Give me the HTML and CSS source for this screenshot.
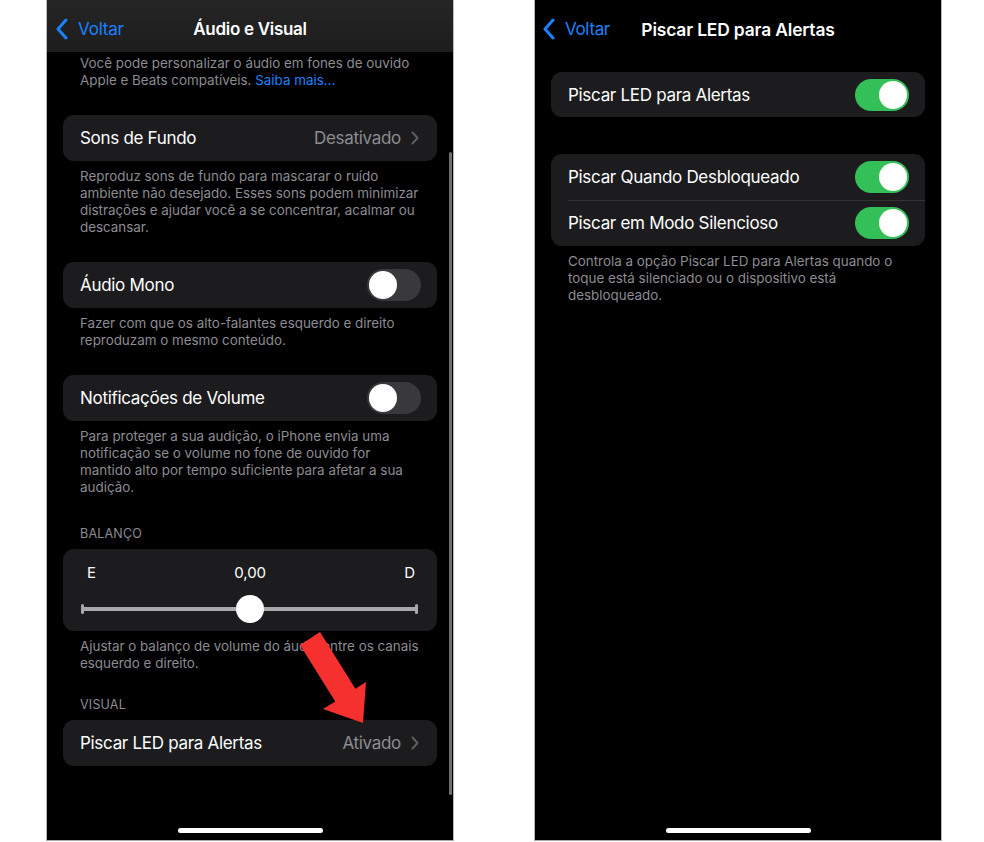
FILE: index.html
```html
<!DOCTYPE html>
<html lang="pt-BR">
<head>
<meta charset="utf-8">
<title>Áudio e Visual</title>
<link rel="stylesheet" href="styles.css">
</head>
<body>
<div class="canvas">

  <section class="phone">
    <header class="nav nav-gray">
      <div class="back">
        <svg class="back-chev" width="14" height="22" viewBox="0 0 14 22"><polyline points="11,2 3,11 11,20" fill="none" stroke="#1a82ff" stroke-width="3" stroke-linecap="round" stroke-linejoin="round"/></svg>
        <span>Voltar</span>
      </div>
      <div class="nav-title">Áudio e Visual</div>
    </header>

    <div class="content content-left">
      <p class="foot first">Você pode personalizar o áudio em fones de ouvido<br>Apple e Beats compatíveis. <span class="link">Saiba mais...</span></p>

      <div class="card">
        <div class="row">
          <span class="label">Sons de Fundo</span>
          <span class="value">Desativado</span>
          <svg class="chev" width="8" height="14" viewBox="0 0 8 14"><polyline points="1.5,1.5 6.5,7 1.5,12.5" fill="none" stroke="#5d5d62" stroke-width="2" stroke-linecap="round" stroke-linejoin="round"/></svg>
        </div>
      </div>
      <p class="foot">Reproduz sons de fundo para mascarar o ruído<br>ambiente não desejado. Esses sons podem minimizar<br>distrações e ajudar você a se concentrar, acalmar ou<br>descansar.</p>

      <div class="card">
        <div class="row">
          <span class="label">Áudio Mono</span>
          <span class="toggle"><span class="knob"></span></span>
        </div>
      </div>
      <p class="foot">Fazer com que os alto-falantes esquerdo e direito<br>reproduzam o mesmo conteúdo.</p>

      <div class="card">
        <div class="row">
          <span class="label">Notificações de Volume</span>
          <span class="toggle"><span class="knob"></span></span>
        </div>
      </div>
      <p class="foot">Para proteger a sua audição, o iPhone envia uma<br>notificação se o volume no fone de ouvido for<br>mantido alto por tempo suficiente para afetar a sua<br>audição.</p>

      <h3 class="group-head head-balanco">BALANÇO</h3>
      <div class="card slider-card">
        <div class="slider-labels">
          <span>E</span>
          <span>0,00</span>
          <span>D</span>
        </div>
        <div class="slider">
          <span class="cap"></span>
          <span class="track"></span>
          <span class="cap"></span>
          <span class="thumb"></span>
        </div>
      </div>
      <p class="foot">Ajustar o balanço de volume do áudio entre os canais<br>esquerdo e direito.</p>

      <h3 class="group-head head-visual">VISUAL</h3>
      <div class="card">
        <div class="row">
          <span class="label">Piscar LED para Alertas</span>
          <span class="value">Ativado</span>
          <svg class="chev" width="8" height="14" viewBox="0 0 8 14"><polyline points="1.5,1.5 6.5,7 1.5,12.5" fill="none" stroke="#5d5d62" stroke-width="2" stroke-linecap="round" stroke-linejoin="round"/></svg>
        </div>
      </div>
    </div>

    <div class="scrollbar"></div>
    <svg class="arrow" width="408" height="841" viewBox="46 0 408 841">
      <polygon points="300,645 320,632 355.4,688.7 366,682 363,723 323,709 335.2,701.4" fill="#f5302e"/>
    </svg>
    <div class="home"></div>
  </section>

  <section class="phone">
    <header class="nav">
      <div class="back back-right">
        <svg class="back-chev" width="14" height="22" viewBox="0 0 14 22"><polyline points="11,2 3,11 11,20" fill="none" stroke="#1a82ff" stroke-width="3" stroke-linecap="round" stroke-linejoin="round"/></svg>
        <span>Voltar</span>
      </div>
      <div class="nav-title title-right">Piscar LED para Alertas</div>
    </header>

    <div class="content content-right">
      <div class="card card-first">
        <div class="row">
          <span class="label">Piscar LED para Alertas</span>
          <span class="toggle on"><span class="knob"></span></span>
        </div>
      </div>

      <div class="card card-second">
        <div class="row">
          <span class="label">Piscar Quando Desbloqueado</span>
          <span class="toggle on"><span class="knob"></span></span>
        </div>
        <div class="sep"></div>
        <div class="row">
          <span class="label">Piscar em Modo Silencioso</span>
          <span class="toggle on"><span class="knob"></span></span>
        </div>
      </div>
      <p class="foot">Controla a opção Piscar LED para Alertas quando o<br>toque está silenciado ou o dispositivo está<br>desbloqueado.</p>
    </div>
    <div class="home"></div>
  </section>

</div>
</body>
</html>
```
FILE: styles.css
```css
* { box-sizing: border-box; }

html, body {
  margin: 0;
  padding: 0;
  background: #ffffff;
}

body {
  width: 984px;
  height: 842px;
  overflow: hidden;
  font-family: "Inter", "Roboto", "Liberation Sans", sans-serif;
  -webkit-font-smoothing: antialiased;
}

.canvas {
  display: flex;
  gap: 80px;
  padding-left: 46px;
  height: 842px;
}

.phone {
  position: relative;
  width: 408px;
  height: 841px;
  background: #000;
  border-left: 1px solid #b9b9b9;
  border-right: 1px solid #b9b9b9;
  border-bottom: 1px solid #a8a8a8;
  overflow: hidden;
  color: #fff;
}

/* nav bar */
.nav {
  position: relative;
  height: 52px;
  padding-top: 6px;
  display: flex;
  align-items: center;
  justify-content: center;
}

.nav-gray {
  background: linear-gradient(#252525, #1d1d1d);
}

.back {
  position: absolute;
  left: 8px;
  top: 6px;
  height: 46px;
  display: flex;
  align-items: center;
  gap: 9px;
  color: #1a82ff;
  font-size: 17px;
  letter-spacing: -0.2px;
}

.back-right { left: 7px; gap: 9px; letter-spacing: -0.35px; }

.nav-title {
  font-size: 17px;
  font-weight: 600;
  letter-spacing: -0.3px;
  color: #fff;
}

.title-right {
  font-size: 17.4px;
  letter-spacing: -0.15px;
}

/* content */
.content {
  padding: 0 16px 0 16px;
}

.content-left { padding-top: 3px; }
.content-right { padding-top: 20px; }

.foot {
  margin: 7px 0 0 0;
  padding: 0 17px;
  font-size: 13.4px;
  line-height: 17px;
  color: #8c8c92;
  white-space: nowrap;
  letter-spacing: 0;
}

.foot.first { margin-top: 0; }

.link { color: #1a82ff; }

.card {
  background: #1c1c1e;
  border-radius: 11px;
  margin-top: 26px;
}

.card-first { margin-top: 0; }
.card-second { margin-top: 37px; }

.row {
  height: 46px;
  display: flex;
  align-items: center;
  padding: 0 16px 0 17px;
}

.card-first .row { height: 45px; }
.card-second .row { height: 45.5px; }

.label {
  flex: 1;
  font-size: 17px;
  letter-spacing: -0.3px;
  color: #fff;
  white-space: nowrap;
}

.value {
  font-size: 17px;
  letter-spacing: -0.3px;
  color: #8c8c92;
  margin-right: 10px;
}

.chev { margin-right: 2px; }

.sep {
  height: 1px;
  background: #333336;
  margin-left: 17px;
}

/* toggles */
.toggle {
  width: 54px;
  height: 32px;
  border-radius: 16px;
  background: #39393d;
  padding: 2px;
  display: flex;
  justify-content: flex-start;
}

.toggle.on {
  background: #33c058;
  justify-content: flex-end;
}

.knob {
  width: 28px;
  height: 28px;
  border-radius: 50%;
  background: #fff;
}

/* section headers */
.group-head {
  margin: 0;
  padding: 0 17px;
  font-size: 12.5px;
  line-height: 16px;
  font-weight: 400;
  color: #8c8c92;
  letter-spacing: 0.2px;
}

.head-balanco { margin-top: 30px; }
.head-visual { margin-top: 25px; }

.head-balanco + .card,
.head-visual + .card { margin-top: 7px; }

/* slider */
.slider-card {
  height: 82px;
  padding: 15px 19px 0 18px;
}

.slider-labels {
  display: flex;
  justify-content: space-between;
  font-size: 15px;
  line-height: 18px;
  color: #fff;
  padding: 0 3px 0 6px;
}

.slider {
  position: relative;
  margin-top: 21px;
  height: 12px;
  display: flex;
  align-items: center;
}

.track {
  flex: 1;
  height: 4px;
  background: #a9a9ab;
}

.cap {
  width: 3px;
  height: 10px;
  border-radius: 1.5px;
  background: #a9a9ab;
}

.thumb {
  position: absolute;
  left: 155px;
  top: -8px;
  width: 28px;
  height: 28px;
  border-radius: 50%;
  background: #fff;
}

/* overlays */
.scrollbar {
  position: absolute;
  left: 402px;
  top: 152px;
  width: 3px;
  height: 643px;
  border-radius: 2px;
  background: #6f6f72;
}

.arrow {
  position: absolute;
  left: -1px;
  top: 0;
  pointer-events: none;
}

.home {
  position: absolute;
  left: 50%;
  bottom: 7px;
  width: 145px;
  height: 5px;
  margin-left: -72.5px;
  border-radius: 3px;
  background: #fff;
}
```
